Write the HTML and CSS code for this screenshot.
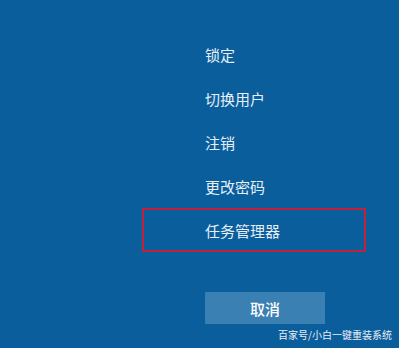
FILE: index.html
```html
<!DOCTYPE html>
<html lang="zh-CN">
<head>
<meta charset="utf-8">
<link rel="stylesheet" href="styles.css">
</head>
<body>
<div class="screen">
  <ul class="menu">
    <li class="item">锁定</li>
    <li class="item">切换用户</li>
    <li class="item">注销</li>
    <li class="item">更改密码</li>
    <li class="item framed">任务管理器</li>
  </ul>
  <div class="actions">
    <button class="cancel">取消</button>
  </div>
  <div class="watermark">百家号/小白一键重装系统</div>
</div>
</body>
</html>
```
FILE: styles.css
```css
html, body {
  margin: 0;
  padding: 0;
}
body {
  background: #0b5e9c;
  font-family: "Noto Sans CJK SC", "Microsoft YaHei", sans-serif;
}
.screen {
  width: 399px;
  height: 348px;
  box-sizing: border-box;
  padding-top: 32px;
  display: flex;
  flex-direction: column;
  overflow: hidden;
}
.menu {
  list-style: none;
  margin: 0;
  padding: 0 0 0 142px;
  display: flex;
  flex-direction: column;
}
.item {
  width: 224px;
  height: 44px;
  box-sizing: border-box;
  border: 2px solid transparent;
  padding-left: 61px;
  display: flex;
  align-items: center;
  color: #e6eff8;
  font-size: 15px;
  line-height: 1;
}
.item.framed {
  border-color: #c0223c;
}
.actions {
  margin-top: 40px;
  padding-left: 205px;
  display: flex;
}
.cancel {
  width: 120px;
  height: 32px;
  border: none;
  background: #3b80b2;
  color: #ffffff;
  font-family: "Noto Sans CJK SC", sans-serif;
  font-size: 15px;
  font-weight: 500;
  padding: 0;
}
.watermark {
  margin-top: 3px;
  padding-right: 7px;
  text-align: right;
  color: #e8eef5;
  font-size: 10px;
  line-height: 16px;
}
```
